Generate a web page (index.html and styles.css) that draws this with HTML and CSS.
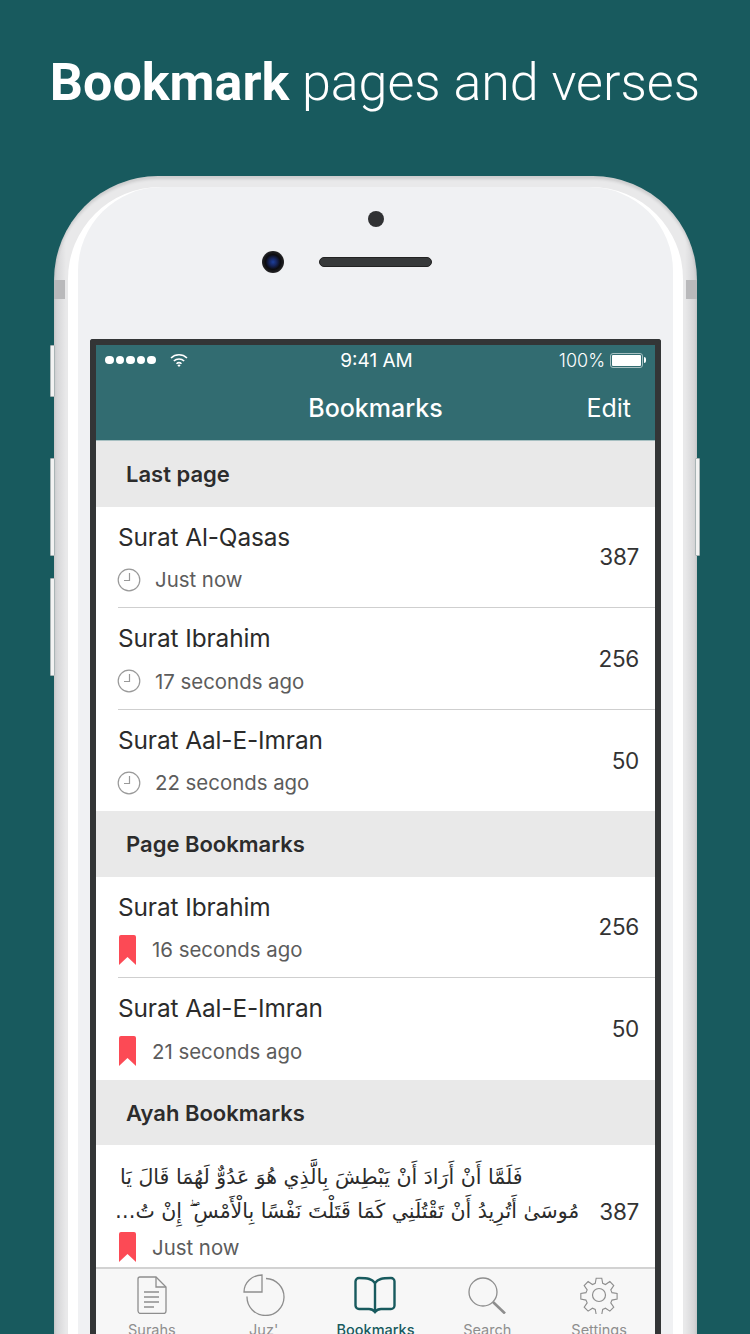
FILE: index.html
```html
<!DOCTYPE html>
<html lang="en">
<head>
  <meta charset="UTF-8" />
  <meta name="viewport" content="width=device-width, initial-scale=1.0"/>
  <title>Bookmark pages and verses</title>
  <link rel="stylesheet" href="styles.css">
</head>
<body>
  <h1 class="headline"><b>Bookmark</b> pages and verses</h1>

  <div class="phone">
    <span class="band band-left"></span>
    <span class="band band-right"></span>
    <span class="side-btn btn-mute"></span>
    <span class="side-btn btn-up"></span>
    <span class="side-btn btn-down"></span>
    <span class="side-btn btn-power"></span>

    <div class="phone-rim">
      <div class="face">
        <div class="sensor"></div>
        <div class="ear-row">
          <span class="camera"></span>
          <span class="speaker"></span>
        </div>

        <div class="screen">
          <header class="topbar">
            <div class="status">
              <div class="status-left">
                <span class="dots"><i></i><i></i><i></i><i></i><i></i></span>
                <svg class="wifi" width="18" height="14" viewBox="0 0 18 14" fill="none" stroke="#fff" stroke-width="1.5">
                  <path d="M1 5a11.500 11.500 0 0 1 16 0"/>
                  <path d="M3.800 8a7.500 7.500 0 0 1 10.400 0"/>
                  <path d="M6.500 10.800a3.600 3.600 0 0 1 5 0"/>
                  <path d="M9 14l-1.600-1.700a2.300 2.300 0 0 1 3.200 0z" fill="#fff" stroke="none"/>
                </svg>
              </div>
              <div class="status-time">9:41 AM</div>
              <div class="status-right">
                <span>100%</span>
                <span class="battery"><i></i></span>
              </div>
            </div>
            <div class="nav">
              <span></span>
              <div class="nav-title">Bookmarks</div>
              <div class="nav-edit">Edit</div>
            </div>
          </header>

          <div class="section">Last page</div>
          <div class="row">
            <div class="row-body">
              <div class="row-main">
                <div class="row-title">Surat Al-Qasas</div>
                <div class="row-sub">
                  <svg class="clock" width="24" height="24" viewBox="0 0 24 24" fill="none" stroke="#999" stroke-width="1.2"><circle cx="12" cy="12" r="10.800"/><path d="M12.500 5v7.500H7"/></svg>
                  <span>Just now</span>
                </div>
              </div>
              <div class="row-num">387</div>
            </div>
          </div>
          <div class="row">
            <div class="row-body">
              <div class="row-main">
                <div class="row-title">Surat Ibrahim</div>
                <div class="row-sub">
                  <svg class="clock" width="24" height="24" viewBox="0 0 24 24" fill="none" stroke="#999" stroke-width="1.2"><circle cx="12" cy="12" r="10.800"/><path d="M12.500 5v7.500H7"/></svg>
                  <span>17 seconds ago</span>
                </div>
              </div>
              <div class="row-num">256</div>
            </div>
          </div>
          <div class="row row-last">
            <div class="row-body">
              <div class="row-main">
                <div class="row-title">Surat Aal-E-Imran</div>
                <div class="row-sub">
                  <svg class="clock" width="24" height="24" viewBox="0 0 24 24" fill="none" stroke="#999" stroke-width="1.2"><circle cx="12" cy="12" r="10.800"/><path d="M12.500 5v7.500H7"/></svg>
                  <span>22 seconds ago</span>
                </div>
              </div>
              <div class="row-num">50</div>
            </div>
          </div>

          <div class="section">Page Bookmarks</div>
          <div class="row">
            <div class="row-body">
              <div class="row-main">
                <div class="row-title">Surat Ibrahim</div>
                <div class="row-sub">
                  <svg class="mark" width="17" height="30" viewBox="0 0 17 30"><path d="M2 0h13a2 2 0 0 1 2 2v28l-8.500-8L0 30V2a2 2 0 0 1 2-2z" fill="#fc4a55"/></svg>
                  <span>16 seconds ago</span>
                </div>
              </div>
              <div class="row-num">256</div>
            </div>
          </div>
          <div class="row row-last">
            <div class="row-body">
              <div class="row-main">
                <div class="row-title">Surat Aal-E-Imran</div>
                <div class="row-sub">
                  <svg class="mark" width="17" height="30" viewBox="0 0 17 30"><path d="M2 0h13a2 2 0 0 1 2 2v28l-8.500-8L0 30V2a2 2 0 0 1 2-2z" fill="#fc4a55"/></svg>
                  <span>21 seconds ago</span>
                </div>
              </div>
              <div class="row-num">50</div>
            </div>
          </div>

          <div class="section">Ayah Bookmarks</div>
          <div class="row row-ayah">
            <div class="row-body">
              <div class="row-main">
                <div class="ayah" lang="ar" dir="rtl">فَلَمَّا أَنْ أَرَادَ أَنْ يَبْطِشَ بِالَّذِي هُوَ عَدُوٌّ لَهُمَا قَالَ يَا<br>مُوسَىٰ أَتُرِيدُ أَنْ تَقْتُلَنِي كَمَا قَتَلْتَ نَفْسًا بِالْأَمْسِ ۖ إِنْ تُ…</div>
                <div class="row-sub">
                  <svg class="mark" width="17" height="30" viewBox="0 0 17 30"><path d="M2 0h13a2 2 0 0 1 2 2v28l-8.500-8L0 30V2a2 2 0 0 1 2-2z" fill="#fc4a55"/></svg>
                  <span>Just now</span>
                </div>
              </div>
              <div class="row-num">387</div>
            </div>
          </div>

          <nav class="tabs">
            <div class="tab">
              <div class="tab-icon">
                <svg width="30" height="38" viewBox="0 0 30 38" fill="none" stroke="#8e8e8e" stroke-width="1.3">
                  <path d="M3 1h16l10 10v24a2.500 2.500 0 0 1-2.500 2.500h-23.500a3 3 0 0 1-2-2.500V3a2 2 0 0 1 2-2z"/>
                  <path d="M19 1v10h10M7 16h15M7 21h15M7 26h15M7 31h10"/>
                </svg>
              </div>
              <span>Surahs</span>
            </div>
            <div class="tab">
              <div class="tab-icon">
                <svg width="42" height="42" viewBox="0 0 42 42" fill="none" stroke="#8e8e8e" stroke-width="1.3">
                  <path d="M19 1v17H1C1 8.500 9 1 19 1z"/>
                  <path d="M23 4.500a18.500 18.500 0 1 1-19 18"/>
                </svg>
              </div>
              <span>Juz'</span>
            </div>
            <div class="tab tab-active">
              <div class="tab-icon">
                <svg width="42" height="38" viewBox="0 0 42 38" fill="none" stroke="#185a5e" stroke-width="2.400">
                  <path d="M21 7C18 3 14 2 5 2a3.500 3.500 0 0 0-3.500 3.500v24A3.500 3.500 0 0 0 5 33h10c3 0 4.500 1 6 3 1.500-2 3-3 6-3h10a3.500 3.500 0 0 0 3.500-3.500v-24A3.500 3.500 0 0 0 37 2c-9 0-13 1-16 5z"/>
                  <path d="M21 7v28"/>
                </svg>
              </div>
              <span>Bookmarks</span>
            </div>
            <div class="tab">
              <div class="tab-icon">
                <svg width="38" height="37" viewBox="0 0 38 37" fill="none" stroke="#8e8e8e">
                  <circle cx="15" cy="15" r="14" stroke-width="1.300"/>
                  <path d="M25 25l12 11.500" stroke-width="2.600"/>
                </svg>
              </div>
              <span>Search</span>
            </div>
            <div class="tab">
              <div class="tab-icon">
                <svg width="38" height="38" viewBox="0 0 38 38" fill="none" stroke="#8e8e8e" stroke-width="1.200">
                  <circle cx="19" cy="19" r="6.500"/>
                  <path d="M16 1h6l1 5.500 3 1.300 4.700-3.200 4.200 4.200-3.200 4.700 1.300 3 5.500 1v6l-5.500 1-1.300 3 3.200 4.700-4.200 4.200-4.700-3.200-3 1.300-1 5.500h-6l-1-5.500-3-1.300-4.700 3.200-4.200-4.200 3.200-4.700-1.300-3-5.500-1v-6l5.500-1 1.300-3-3.200-4.700 4.200-4.200 4.700 3.200 3-1.300z" transform="translate(1.300 1.300) scale(.93)"/>
                </svg>
              </div>
              <span>Settings</span>
            </div>
          </nav>
        </div>
      </div>
    </div>
  </div>
</body>
</html>
```

FILE: styles.css
```css
body {
  margin: 0;
  background: #185a5e;
  font-family: Inter, "Noto Sans", sans-serif;
  overflow: hidden;
  height: 1334px;
}

.headline {
  margin: 0;
  height: 176px;
  padding-top: 52px;
  box-sizing: border-box;
  text-align: center;
  color: #fff;
  font-family: Roboto, sans-serif;
  font-size: 52px;
  line-height: 62px;
  font-weight: 300;
  white-space: nowrap;
}

.headline b {
  font-weight: 700;
}

.phone {
  position: relative;
  width: 643px;
  height: 1200px;
  margin-left: 54px;
  padding-top: 11px;
  box-sizing: border-box;
  border-radius: 104px 104px 0 0;
  background: linear-gradient(to right, #d0d0d2 0, #e9e9ea 12px, #e9e9ea calc(100% - 12px), #d0d0d2 100%);
  box-shadow: inset 0 3px 3px rgba(0, 0, 0, 0.12);
}

.phone-rim {
  height: 100%;
  margin: 0 14px;
  border-radius: 92px 92px 0 0;
  background: #fff;
  padding: 0 10px;
}

.face {
  height: 100%;
  border-radius: 84px 84px 0 0;
  background: #f0f1f3;
  padding-top: 24px;
  box-sizing: border-box;
}

.band {
  position: absolute;
  top: 104px;
  width: 11px;
  height: 19px;
  background: #b9b9bb;
}

.band-left { left: 0; }
.band-right { right: 0; }

.side-btn {
  position: absolute;
  width: 5px;
  background: #f2f2f2;
  border: 1px solid #a9b4b5;
  box-sizing: border-box;
  border-radius: 1px;
}

.btn-mute { left: -4px; top: 169px; height: 52px; }
.btn-up { left: -4px; top: 282px; height: 98px; }
.btn-down { left: -4px; top: 402px; height: 98px; }
.btn-power { right: -3px; top: 282px; height: 98px; }

.sensor {
  width: 16px;
  height: 16px;
  margin: 0 auto;
  border-radius: 50%;
  background: #303133;
}

.ear-row {
  display: grid;
  grid-template-columns: 1fr auto 1fr;
  align-items: center;
  margin-top: 24px;
}

.camera {
  justify-self: end;
  width: 22px;
  height: 22px;
  margin-right: 35px;
  border-radius: 50%;
  background: radial-gradient(circle at 50% 50%, #1c3f9c 0, #16255e 24%, #0c0c10 48%, #333 85%, #666 100%);
}

.speaker {
  width: 113px;
  height: 10px;
  border-radius: 5px;
  background: #37393a;
  border: 1px solid #222;
  box-sizing: border-box;
}

.screen {
  width: 559px;
  height: 1000px;
  margin: 66px auto 0;
  border: 6px solid #333536;
  border-bottom: 0;
  border-radius: 3px 3px 0 0;
  background: #fff;
}

.topbar {
  height: 96px;
  box-sizing: border-box;
  background: #326c71;
  border-bottom: 1px solid #a7c0c2;
  color: #fff;
}

.status {
  display: grid;
  grid-template-columns: 1fr auto 1fr;
  align-items: center;
  height: 30px;
  padding: 0 12px 0 9px;
  font-size: 17px;
}

.status-left,
.status-right {
  display: flex;
  align-items: center;
}

.status-left {
  gap: 14px;
}

.status-right {
  justify-content: flex-end;
  gap: 5px;
  font-size: 18px;
  font-weight: 300;
}

.status-time {
  margin-left: 5px;
  font-size: 19px;
}

.dots {
  display: flex;
  gap: 2px;
}

.dots i {
  width: 8.500px;
  height: 8.500px;
  border-radius: 50%;
  background: #fff;
}

.wifi {
  display: block;
}

.battery {
  display: block;
  position: relative;
  width: 33px;
  height: 15px;
  padding: 1px;
  border: 1px solid #a7c0c2;
  border-radius: 3px;
  box-sizing: border-box;
}

.battery i {
  display: block;
  height: 100%;
  background: #fff;
  border-radius: 1px;
}

.battery::after {
  content: "";
  position: absolute;
  right: -4px;
  top: 3px;
  width: 2px;
  height: 6px;
  background: #fff;
  border-radius: 0 2px 2px 0;
}

.nav {
  display: grid;
  grid-template-columns: 1fr auto 1fr;
  align-items: center;
  height: 65px;
  padding: 0 24px;
  box-sizing: border-box;
  font-size: 25px;
}

.nav-title {
  font-weight: 500;
}

.nav-edit {
  justify-self: end;
}

.section {
  height: 65.600px;
  padding-left: 30px;
  background: #e9e9e9;
  color: #2c2c2c;
  font-size: 22px;
  font-weight: 600;
  line-height: 66px;
}

.row {
  height: 101.500px;
  padding-left: 22px;
  background: #fff;
}

.row-body {
  display: flex;
  align-items: center;
  height: 100%;
  padding-right: 16px;
  box-sizing: border-box;
  border-bottom: 1px solid #cfcfcf;
}

.row-last .row-body,
.row-ayah .row-body {
  border-bottom: 0;
}

.row-main {
  flex: 1;
  min-width: 0;
  align-self: stretch;
}

.row-title {
  padding-top: 15px;
  font-size: 24.400px;
  line-height: 31px;
  letter-spacing: -0.1px;
  color: #2b2b2b;
}

.row-sub {
  display: flex;
  align-items: center;
  height: 30px;
  margin-top: 12px;
  color: #5c5c5c;
  font-size: 20.400px;
}

.clock {
  margin-right: 14px;
  margin-left: -1px;
}

.mark {
  margin-left: 1px;
  margin-right: 16px;
}

.row-num {
  font-size: 22.500px;
  letter-spacing: -0.3px;
  color: #333;
}

.row-ayah {
  height: 122px;
}

.row-ayah .row-num {
  margin-top: 10px;
}

.ayah {
  padding-top: 15px;
  padding-left: 2px;
  margin-right: 20px;
  font-family: "DejaVu Sans", sans-serif;
  font-size: 20.500px;
  line-height: 34px;
  color: #2b2b2b;
  white-space: nowrap;
  text-align: left;
}

.row-ayah .row-sub {
  margin-top: 4px;
}

.tabs {
  display: grid;
  grid-template-columns: repeat(5, 1fr);
  height: 80px;
  background: #f7f7f7;
  border-top: 2px solid #d2d2d2;
  box-sizing: border-box;
}

.tab {
  display: flex;
  flex-direction: column;
  align-items: center;
  padding-top: 7px;
  color: #8e8e8e;
  font-size: 14.500px;
  line-height: 18px;
}

.tab-icon {
  display: flex;
  align-items: center;
  height: 38px;
  margin-bottom: 7px;
}

.tab-icon svg {
  display: block;
}

.tab-active {
  color: #185a5e;
  font-weight: 500;
}
```
